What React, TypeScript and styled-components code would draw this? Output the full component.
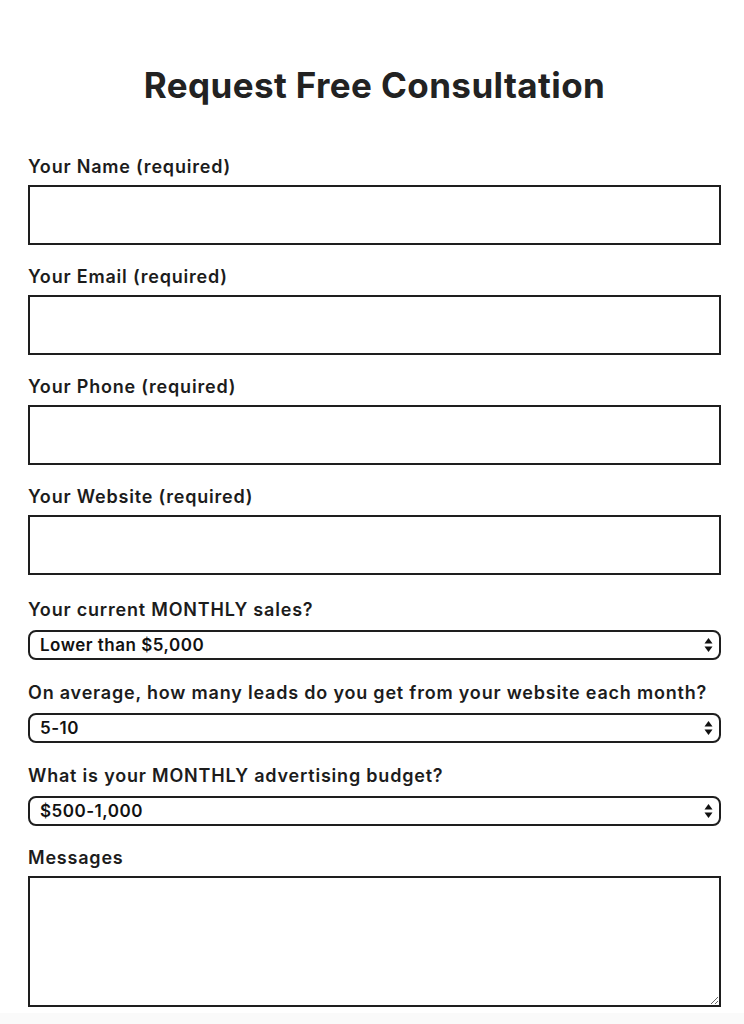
import React from 'react';
import styled, { createGlobalStyle } from 'styled-components';

const GlobalStyle = createGlobalStyle`
  html, body {
    margin: 0;
    padding: 0;
    background: #fafafa;
  }
  * {
    box-sizing: border-box;
  }
`;

interface SelectFieldProps {
    label: string;
    value: string;
    options: string[];
    lead?: boolean;
}

const SelectField: React.FC<SelectFieldProps> = ({ label, value, options, lead }) => {
    return (
        <SelectGroup $lead={lead}>
            <SelectLabel>{label}</SelectLabel>
            <SelectWrap>
                <Select defaultValue={value}>
                    {options.map((o) => (
                        <option key={o} value={o}>{o}</option>
                    ))}
                </Select>
                <Arrows width="9" height="16" viewBox="0 0 9 16">
                    <path d="M4.5 1 L8.5 6.5 L0.5 6.5 Z" fill="#111" />
                    <path d="M4.5 15 L8.5 9.5 L0.5 9.5 Z" fill="#111" />
                </Arrows>
            </SelectWrap>
        </SelectGroup>
    );
};

const App: React.FC = () => {
    return (
        <Page>
            <GlobalStyle />
            <Title>Request Free Consultation</Title>
            <Form onSubmit={(e) => e.preventDefault()}>
                <Field>
                    <Label>Your Name (required)</Label>
                    <TextInput type="text" />
                </Field>
                <Field>
                    <Label>Your Email (required)</Label>
                    <TextInput type="email" />
                </Field>
                <Field>
                    <Label>Your Phone (required)</Label>
                    <TextInput type="tel" />
                </Field>
                <Field>
                    <Label>Your Website (required)</Label>
                    <TextInput type="text" />
                </Field>
                <SelectField
                    lead
                    label="Your current MONTHLY sales?"
                    value="Lower than $5,000"
                    options={['Lower than $5,000', '$5,000-10,000', '$10,000-50,000', 'More than $50,000']}
                />
                <SelectField
                    label="On average, how many leads do you get from your website each month?"
                    value="5-10"
                    options={['Less than 5', '5-10', '10-50', 'More than 50']}
                />
                <SelectField
                    label="What is your MONTHLY advertising budget?"
                    value="$500-1,000"
                    options={['Less than $500', '$500-1,000', '$1,000-5,000', 'More than $5,000']}
                />
                <Field>
                    <Label>Messages</Label>
                    <MessageBox />
                </Field>
            </Form>
        </Page>
    );
};

export default App;

const Page = styled.div`
  background: #ffffff;
  width: 744px;
  min-height: 1012px;
  padding: 62px 23px 6px 28px;
  font-family: Inter, "Noto Sans", sans-serif;
  color: #1c1c1c;
`;

const Title = styled.h1`
  margin: 0 0 47px 0;
  text-align: center;
  font-size: 35px;
  font-weight: 700;
  line-height: 46px;
  color: #222;
  letter-spacing: 0.4px;
`;

const Form = styled.form`
  display: flex;
  flex-direction: column;
  gap: 20px;
`;

const Field = styled.div`
  display: flex;
  flex-direction: column;
`;

const SelectGroup = styled(Field)<{ $lead?: boolean }>`
  margin-top: ${(p) => (p.$lead ? '3px' : '1px')};
`;

const Label = styled.label`
  font-size: 18px;
  font-weight: 600;
  line-height: 24px;
  margin-bottom: 6px;
  letter-spacing: 0.8px;
  white-space: nowrap;
`;

const SelectLabel = styled(Label)`
  margin-bottom: 8px;
`;

const TextInput = styled.input`
  height: 60px;
  width: 100%;
  border: 2px solid #1e1e1e;
  border-radius: 0;
  background: #fff;
  padding: 0 12px;
  font: inherit;
  outline: none;
`;

const SelectWrap = styled.div`
  position: relative;
`;

const Select = styled.select`
  appearance: none;
  -webkit-appearance: none;
  width: 100%;
  height: 30px;
  border: 2px solid #1e1e1e;
  border-radius: 8px;
  background: #fff;
  padding: 0 30px 0 10px;
  font-family: inherit;
  font-size: 17px;
  font-weight: 600;
  letter-spacing: 0.5px;
  color: #111;
  outline: none;
`;

const Arrows = styled.svg`
  position: absolute;
  right: 8px;
  top: 7px;
  pointer-events: none;
`;

const MessageBox = styled.textarea`
  height: 131px;
  width: 100%;
  border: 2px solid #1e1e1e;
  border-radius: 0;
  background: #fff;
  padding: 10px 12px;
  font: inherit;
  outline: none;
`;
